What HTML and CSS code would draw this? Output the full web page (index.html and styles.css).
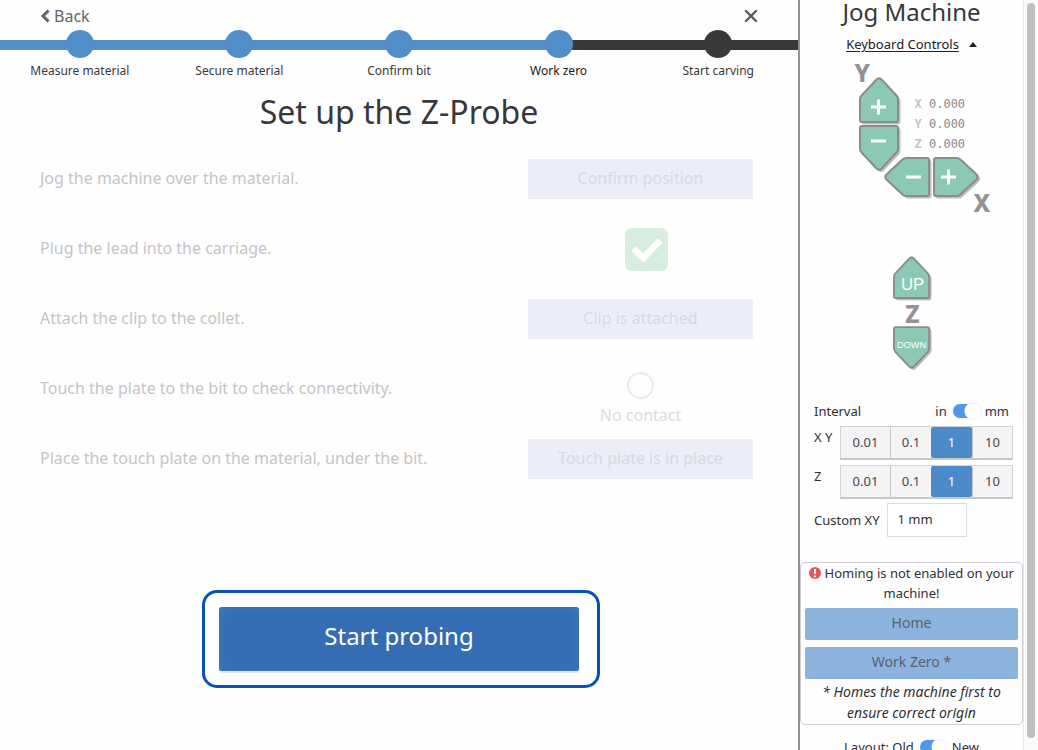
FILE: index.html
```html
<!DOCTYPE html>
<html lang="en">
<head>
<meta charset="utf-8">
<title>Set up the Z-Probe</title>
<link rel="stylesheet" href="styles.css">
</head>
<body>
<svg class="defs" aria-hidden="true">
  <defs>
    <path id="pent" d="M1 22.500Q1 20 2.500 18.500L17.500 2.500Q20 0 22.500 2.500L37.500 18.500Q39 20 39 22.500V43Q39 45 37 45H3Q1 45 1 43Z"/>
  </defs>
</svg>
<div class="app">
  <main class="wizard">
    <header class="topbar">
      <button class="back" type="button"><svg width="10" height="14" viewBox="0 0 10 14"><path d="M8.500 1.500L3 7l5.500 5.500" fill="none" stroke="currentColor" stroke-width="3"/></svg>Back</button>
      <button class="close" type="button" aria-label="Close"><svg width="14" height="14" viewBox="0 0 14 14"><path d="M2 2l10 10M12 2L2 12" fill="none" stroke="currentColor" stroke-width="2.400" stroke-linecap="round"/></svg></button>
    </header>
    <ol class="progress">
      <li class="step done"><span class="dot"></span>Measure material</li>
      <li class="step done"><span class="dot"></span>Secure material</li>
      <li class="step done"><span class="dot"></span>Confirm bit</li>
      <li class="step current"><span class="dot"></span>Work zero</li>
      <li class="step"><span class="dot"></span>Start carving</li>
    </ol>
    <h1 class="title">Set up the Z-Probe</h1>
    <ul class="tasks">
      <li class="task"><span class="task-text">Jog the machine over the material.</span><button class="task-btn" type="button" disabled>Confirm position</button></li>
      <li class="task"><span class="task-text">Plug the lead into the carriage.</span>
        <svg class="check" width="44" height="44" viewBox="0 0 44 44"><rect y="1" width="43" height="43" rx="7" fill="#d6eddf"/><path d="M8.500 21.500l10 9.500L35 13.500" fill="none" stroke="#fff" stroke-width="6.500"/></svg></li>
      <li class="task"><span class="task-text">Attach the clip to the collet.</span><button class="task-btn" type="button" disabled>Clip is attached</button></li>
      <li class="task"><span class="task-text">Touch the plate to the bit to check connectivity.</span><div class="contact"><span class="ring"></span>No contact</div></li>
      <li class="task"><span class="task-text">Place the touch plate on the material, under the bit.</span><button class="task-btn" type="button" disabled>Touch plate is in place</button></li>
    </ul>
    <div class="start-frame"><button class="start" type="button">Start probing</button></div>
  </main>
  <aside class="side">
    <div class="panel">
      <h2 class="panel-title">Jog Machine</h2>
      <a class="keys" href="#"><span class="keys-text">Keyboard Controls</span><svg width="8" height="5" viewBox="0 0 8 5"><path d="M0 5L4 0l4 5z" fill="currentColor"/></svg></a>
      <div class="pad">
        <b class="axis axis-y">Y</b>
        <button class="jog y-plus" type="button" aria-label="Y plus"><svg width="42" height="49" viewBox="0 0 42 49"><use href="#pent" class="shade" x="2" y="2"/><use href="#pent" class="key"/><path class="sign" d="M12 30h15M19.500 22.500v15"/></svg></button>
        <button class="jog y-minus" type="button" aria-label="Y minus"><svg width="42" height="49" viewBox="0 0 42 49"><g transform="translate(0 46) scale(1 -1)"><use href="#pent" class="shade" x="2" y="-2"/><use href="#pent" class="key"/></g><path class="sign" d="M12 16h15"/></svg></button>
        <button class="jog x-minus" type="button" aria-label="X minus"><svg width="49" height="42" viewBox="0 0 49 42"><use href="#pent" class="shade" transform="translate(2 42) rotate(-90)"/><use href="#pent" class="key" transform="translate(0 40) rotate(-90)"/><path class="sign" d="M22 20h15"/></svg></button>
        <button class="jog x-plus" type="button" aria-label="X plus"><svg width="49" height="42" viewBox="0 0 49 42"><use href="#pent" class="shade" transform="translate(49 2) rotate(90)"/><use href="#pent" class="key" transform="translate(47 0) rotate(90)"/><path class="sign" d="M9 20h15M16.500 12.500v15"/></svg></button>
        <b class="axis axis-x">X</b>
        <div class="readout">
          <div><b>X</b> 0.000</div>
          <div><b>Y</b> 0.000</div>
          <div><b>Z</b> 0.000</div>
        </div>
      </div>
      <div class="zcol">
        <button class="jog" type="button"><svg class="zkey" width="39" height="46" viewBox="0 0 42 49"><use href="#pent" class="shade" x="2" y="2"/><use href="#pent" class="key"/><text x="21" y="36" class="up">UP</text></svg></button>
        <b class="axis">Z</b>
        <button class="jog" type="button"><svg class="zkey" width="39" height="46" viewBox="0 0 42 49"><g transform="translate(0 46) scale(1 -1)"><use href="#pent" class="shade" x="2" y="-2"/><use href="#pent" class="key"/></g><text x="20" y="23" class="down">DOWN</text></svg></button>
      </div>
      <div class="unit-row">
        <span>Interval</span>
        <label class="units">in<input class="switch" type="checkbox" role="switch" checked>mm</label>
      </div>
      <div class="int-row"><span class="int-label">X Y</span><div class="seg"><button type="button">0.01</button><button type="button">0.1</button><button type="button" class="on">1</button><button type="button">10</button></div></div>
      <div class="int-row"><span class="int-label">Z</span><div class="seg"><button type="button">0.01</button><button type="button">0.1</button><button type="button" class="on">1</button><button type="button">10</button></div></div>
      <div class="custom"><label for="custom">Custom XY</label><input id="custom" type="text" value="1 mm"></div>
      <section class="homing">
        <p class="alert"><svg class="warn" width="12" height="12" viewBox="0 0 12 12"><circle cx="6" cy="6" r="6" fill="#e85558"/><path d="M6 2v5M6 8.500v1.800" stroke="#fff" stroke-width="2"/></svg> Homing is not enabled on your machine!</p>
        <button class="home-btn" type="button" disabled>Home</button>
        <button class="home-btn" type="button" disabled>Work Zero *</button>
        <p class="note">* Homes the machine first to ensure correct origin</p>
      </section>
      <label class="layout">Layout: Old<input class="switch" type="checkbox" role="switch" checked>New</label>
    </div>
    <div class="scroll"><div class="thumb"></div></div>
  </aside>
</div>
</body>
</html>
```

FILE: styles.css
```css
* { box-sizing: border-box; }
body { margin: 0; font-family: "Noto Sans", sans-serif; font-size: 13px; color: #303034; background: #fefefe; overflow: hidden; }
button, input { font-family: inherit; }
button { padding: 0; border: 0; background: none; }
ol, ul { list-style: none; margin: 0; padding: 0; }
h1, h2, p { margin: 0; font-weight: 400; }
.defs { position: absolute; width: 0; height: 0; }
.app { display: grid; grid-template-columns: minmax(0, 1fr) 240px; height: 100vh; }

/* Wizard */
.wizard { display: flex; flex-direction: column; }
.topbar { display: flex; justify-content: space-between; align-items: center; height: 30px; padding: 2px 40px 0 40px; }
.back { display: flex; align-items: center; gap: 4px; font-size: 16px; line-height: 24px; color: #646467; }
.close { display: flex; color: #58585b; }
.progress { display: grid; grid-template-columns: repeat(5, 1fr); }
.step { display: flex; flex-direction: column; align-items: center; gap: 4px; font-size: 12px; line-height: 18px; color: #39383b; background: linear-gradient(#3a383b, #3a383b) 0 10px / 100% 10px no-repeat; }
.step.done { background-image: linear-gradient(#528ec9, #528ec9); }
.step.current { color: #18181a; background-image: linear-gradient(90deg, #528ec9 50%, #3a383b 50%); }
.dot { width: 28px; height: 28px; border-radius: 50%; background: #3a383b; }
.done .dot, .current .dot { background: #528ec9; }
.title { margin-top: 10px; font-size: 32px; line-height: 44px; text-align: center; color: #38373a; }
.tasks { padding: 10px 45px 0 40px; }
.task { display: grid; grid-template-columns: minmax(0, 1fr) 225px; grid-template-rows: 70px; align-items: center; justify-items: start; font-size: 16px; line-height: 24px; color: #c5c4c7; }
.task-text { padding-bottom: 3px; }
.task-btn { width: 100%; height: 40px; padding-bottom: 2px; font-size: 16px; color: #d8d9e3; background: #ebeef8; }
.check { justify-self: center; margin-left: 12px; }
.contact { justify-self: center; display: flex; flex-direction: column; align-items: center; gap: 4px; padding-top: 20px; color: #dddbe0; }
.ring { width: 27px; height: 27px; border: 2px solid #ece8ef; border-radius: 50%; }
.start-frame { align-self: center; margin: 96px 0 0 4px; padding: 14px 18px 14px 14px; border: 3px solid #0650b8; border-radius: 15px; }
.start { display: block; width: 360px; height: 64px; border-radius: 3px; font-size: 24px; line-height: 32px; padding-bottom: 6px; color: #fff; background: #356db4; box-shadow: inset 0 0 14px #4178b5, 0 2px 1px #e4e6f0; }

/* Side panel */
.side { display: grid; grid-template-columns: minmax(0, 1fr) 15px; grid-template-rows: 100vh; border-left: 2px solid #919193; height: 100vh; overflow: hidden; }
.panel { display: flex; flex-direction: column; align-items: stretch; min-width: 0; }
.panel > * { flex-shrink: 0; }
.panel-title { font-size: 24px; line-height: 24px; text-align: center; color: #38373a; }
.keys { display: flex; align-items: center; justify-content: center; gap: 10px; margin-top: 10px; line-height: 20px; color: #202024; text-decoration: none; }
.keys-text { text-decoration: underline; text-underline-offset: 2px; }

/* Jog keys lie around the axis corner, with the labels over their edges */
.pad { position: relative; align-self: center; width: 142px; height: 202px; }
.axis { font-size: 24px; font-weight: 800; line-height: 24px; color: #949295; }
.pad .axis, .pad .jog, .readout { position: absolute; }
.axis-y { left: 14px; top: 7px; }
.axis-x { left: 133px; top: 137px; }
.jog { display: block; line-height: 0; }
.y-plus { left: 18px; top: 23px; }
.y-minus { left: 18px; top: 71px; }
.x-minus { left: 43px; top: 103px; }
.x-plus { left: 91px; top: 103px; }
.key { fill: #8bc9b5; stroke: #8c8b8d; stroke-width: 2; }
.shade { fill: #bdbbbe; stroke: #bdbbbe; stroke-width: 1; }
.sign { fill: none; stroke: #fff; stroke-width: 3; }
.readout { left: 74px; top: 40px; font-family: "DejaVu Sans Mono", monospace; font-size: 12px; line-height: 20px; color: #8b898c; white-space: nowrap; }
.readout b { color: #c5c4c7; }
.zcol { display: flex; flex-direction: column; align-items: center; gap: 1px; padding-left: 2px; }
.zcol .axis { line-height: 22px; }
.zkey text { font-family: "Liberation Sans", sans-serif; text-anchor: middle; fill: #fff; }
.up { font-size: 18px; }
.down { font-size: 10px; }

.unit-row { display: flex; justify-content: space-between; margin-top: 29px; padding: 0 14px; line-height: 20px; }
.units, .layout { display: flex; align-items: center; }
.switch { appearance: none; width: 28px; height: 14px; margin: 0 4px 0 6px; border-radius: 7px; background: radial-gradient(circle at 20px 7px, #fff 8px, #5295ec 9px); box-shadow: 0 0 2px #d4d4e2; }
.int-row { display: flex; justify-content: space-between; height: 34px; margin: 5px 10px 0 14px; line-height: 22px; }
.seg { display: grid; grid-template-columns: 49px 41px 41px 40px; border: 1px solid #d2d2d4; border-bottom: 2px solid #c7c6c9; background: #f4f4f5; }
.seg button { font-size: 13px; color: #48474a; border-left: 1px solid #c9c8cb; padding-bottom: 2px; }
.seg button:first-child { border-left: 0; }
.seg .on { color: #fff; background: #4c8bc9; border: 0; border-radius: 2px; }
.custom { display: flex; align-items: center; gap: 7px; margin: 4px 14px 0; }
.custom input { width: 80px; height: 34px; padding: 0 10px 2px; border: 1px solid #dcdbe0; font-size: 13px; color: #303034; background: #fff; }
.homing { margin: 25px 0 0; padding: 0 4px 1px; border: 1px solid #cfccd2; border-radius: 5px; font-size: 14px; line-height: 21px; text-align: center; }
.alert { font-size: 13px; line-height: 20px; }
.warn { vertical-align: -1px; }
.home-btn { display: block; width: 100%; height: 32px; margin: 5px 0 7px; padding-bottom: 4px; border-radius: 2px; font-size: 14px; color: #59616d; background: #8bb3dd; }
.home-btn + .home-btn { margin-bottom: 2px; }
.note { padding: 0 10px; font-style: italic; }
.layout { justify-content: center; margin-top: 12px; line-height: 20px; }
.scroll { padding: 3px 3px 12px; border-left: 1px solid #e6e5e8; background: #faf9fc; }
.thumb { height: 100%; border-radius: 4px; background: #c0bec1; }
```
